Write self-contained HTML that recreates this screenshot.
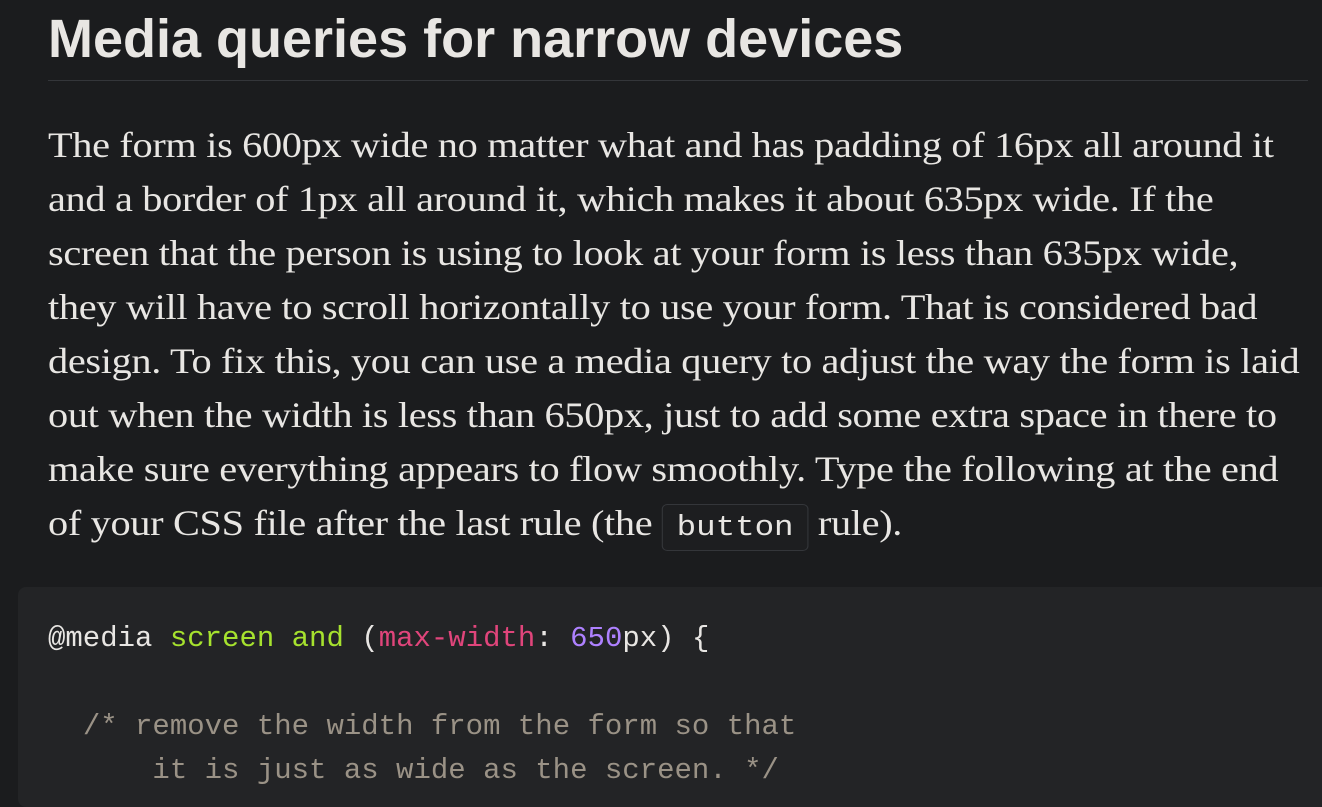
<!DOCTYPE html>
<html><head><style>
html,body{margin:0;padding:0;background:#1b1c1e;width:1322px;height:792px;overflow:hidden}
h1{position:absolute;left:48px;top:4px;margin:0;font:bold 54px/70px "Liberation Sans",sans-serif;color:#e8e6e3;white-space:nowrap;letter-spacing:0px}
.rule{position:absolute;left:48px;top:80px;width:1260px;height:1px;background:#34363a}
.p{position:absolute;left:48px;top:118px;font:36px/54px "Liberation Serif",serif;color:#e8e6e3;white-space:nowrap;transform:scaleX(1.12);transform-origin:0 0;letter-spacing:-0.3px}
code.i{font:29px "Liberation Mono",monospace;background:#1d1e20;border:1px solid #34363a;border-radius:5px;padding:6px 12px;letter-spacing:0}
.code{position:absolute;left:18px;top:587px;width:1320px;height:220px;background:#232426;border-radius:8px}
pre{position:absolute;left:48px;top:617px;margin:0;font:29px/44px "Liberation Mono",monospace;color:#e8e6e3}
.g{color:#a6e22e}.r{color:#e0457b}.v{color:#ae81ff}.c{color:#9a9286}
</style></head><body>
<h1>Media queries for narrow devices</h1>
<div class="rule"></div>
<div class="p">The form is 600px wide no matter what and has padding of 16px all around it<br>and a border of 1px all around it, which makes it about 635px wide. If the<br>screen that the person is using to look at your form is less than 635px wide,<br>they will have to scroll horizontally to use your form. That is considered bad<br>design. To fix this, you can use a media query to adjust the way the form is laid<br>out when the width is less than 650px, just to add some extra space in there to<br>make sure everything appears to flow smoothly. Type the following at the end<br>of your CSS file after the last rule (the <code class="i">button</code> rule).</div>
<div class="code"></div>
<pre>@media <span class="g">screen</span> <span class="g">and</span> (<span class="r">max-width</span>: <span class="v">650</span>px) {

  <span class="c">/* remove the width from the form so that
      it is just as wide as the screen. */</span></pre>
</body></html>
